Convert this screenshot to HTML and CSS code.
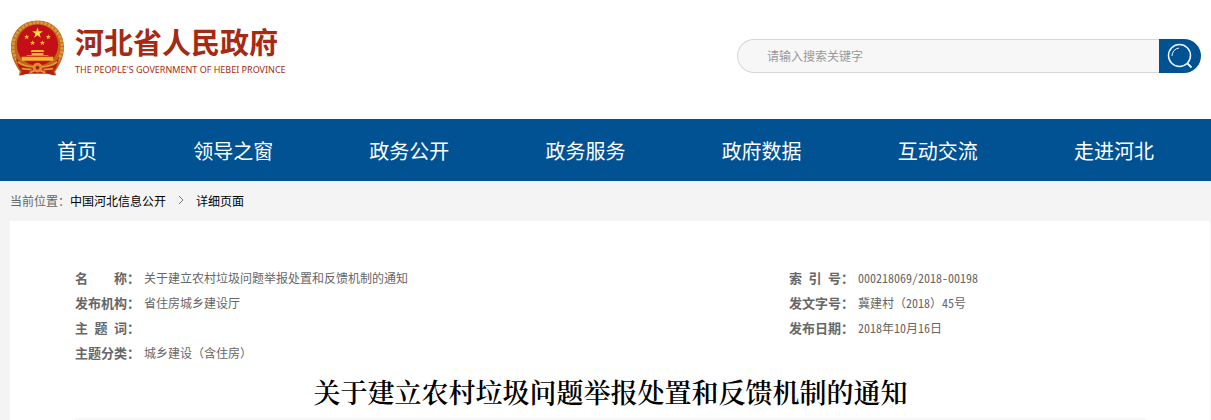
FILE: index.html
```html
<!DOCTYPE html>
<html lang="zh-CN">
<head>
<meta charset="utf-8">
<meta name="viewport" content="width=device-width, initial-scale=1">
<title>关于建立农村垃圾问题举报处置和反馈机制的通知</title>
<link rel="stylesheet" href="styles.css">
</head>
<body>
<header class="header">
  <a class="logo" href="#">
    <svg class="emblem" viewBox="0 0 56 58" aria-hidden="true">
      <path d="M28 1C12 1 1 13 1 28c0 11 5 19 9 25l-1 4 9-2h20l9 2-1-4c4-6 9-14 9-25C55 13 44 1 28 1Z" fill="#c2651d"/>
      <circle cx="28" cy="28" r="25" fill="none" stroke="#d99a3c" stroke-width="3" stroke-dasharray="3 1"/>
      <circle cx="28" cy="26" r="21" fill="#c40f17"/>
      <path d="M28 8l1.300 4h4.200l-3.400 2.500 1.300 4-3.400-2.500-3.400 2.500 1.300-4-3.400-2.500h4.200Z" fill="#ffdf3c"/>
      <g fill="#f4b62f">
        <path d="M17 15l.7 1.800 2 .1-1.600 1.200.6 2-1.700-1.100-1.700 1.100.6-2-1.600-1.200 2-.1ZM39 15l.7 1.800 2 .1-1.600 1.200.6 2-1.700-1.100-1.700 1.100.6-2-1.600-1.200 2-.1ZM23 21l.7 1.800 2 .1-1.600 1.200.6 2-1.700-1.100-1.700 1.100.6-2-1.600-1.200 2-.1ZM33 21l.7 1.800 2 .1-1.600 1.200.6 2-1.700-1.100-1.700 1.100.6-2-1.600-1.200 2-.1Z"/>
        <path d="M22 31h12l1 2H21ZM22 34h12v2h5v1H17v-1h5ZM12 38h32v4H12Z"/>
      </g>
      <path d="M6 38c5 8 11 9 17 9h10c6 0 12-1 17-9-1 7-3 12-6 15l2 4-9-2H19l-9 2 2-4C9 50 7 45 6 38Z" fill="#b71d18"/>
      <path d="M8 43c6 5 12 5 16 5M48 43c-6 5-12 5-16 5M12 50l10 1M44 50l-10 1M20 54l5-2M36 54l-5-2" fill="none" stroke="#e39a2d" stroke-width="2"/>
      <circle cx="28" cy="49" r="5" fill="#df8d2a"/>
      <circle cx="28" cy="49" r="2" fill="#b71d18"/>
    </svg>
    <span class="brand">
      <span class="brand-name">河北省人民政府</span>
      <span class="brand-sub">THE PEOPLE'S GOVERNMENT OF HEBEI PROVINCE</span>
    </span>
  </a>
  <form class="search">
    <input class="search-input" type="text" placeholder="请输入搜索关键字" aria-label="请输入搜索关键字">
    <button class="search-button" type="button" aria-label="搜索">
      <svg class="search-icon" viewBox="0 0 26 26" fill="none" stroke="#e8f4ff" aria-hidden="true">
        <circle cx="12.500" cy="12.500" r="11" stroke-width="1.500"/>
        <path d="M5 13a8 8 0 0 1 7-8" stroke-width="1"/>
        <path d="M20 20l4.500 4.500" stroke-width="2"/>
      </svg>
    </button>
  </form>
</header>
<nav class="nav">
  <a href="#">首页</a>
  <a href="#">领导之窗</a>
  <a href="#">政务公开</a>
  <a href="#">政务服务</a>
  <a href="#">政府数据</a>
  <a href="#">互动交流</a>
  <a href="#">走进河北</a>
</nav>
<div class="crumbs">
  <span>当前位置：</span>
  <a href="#">中国河北信息公开</a>
  <svg class="chevron" viewBox="0 0 6 10" aria-hidden="true"><path d="M1 1l4 4-4 4" fill="none" stroke="#777"/></svg>
  <a href="#">详细页面</a>
</div>
<main class="article">
  <div class="meta">
    <dl class="meta-list">
      <div class="meta-row"><dt>名&emsp;&emsp;称：</dt><dd>关于建立农村垃圾问题举报处置和反馈机制的通知</dd></div>
      <div class="meta-row"><dt>发布机构：</dt><dd>省住房城乡建设厅</dd></div>
      <div class="meta-row"><dt>主&ensp;题&ensp;词：</dt><dd></dd></div>
      <div class="meta-row"><dt>主题分类：</dt><dd>城乡建设（含住房）</dd></div>
    </dl>
    <dl class="meta-list">
      <div class="meta-row"><dt>索&ensp;引&ensp;号：</dt><dd>000218069/2018-00198</dd></div>
      <div class="meta-row"><dt>发文字号：</dt><dd>冀建村（2018）45号</dd></div>
      <div class="meta-row"><dt>发布日期：</dt><dd>2018年10月16日</dd></div>
    </dl>
  </div>
  <h1 class="title">关于建立农村垃圾问题举报处置和反馈机制的通知</h1>
</main>
</body>
</html>
```
FILE: styles.css
```css
* { box-sizing: border-box; }
body {
  margin: 0;
  background: #f4f4f4;
  color: #666;
  font: 12px/25px "Noto Sans Mono CJK SC", "Noto Sans CJK SC", sans-serif;
}
a { color: inherit; text-decoration: none; }
.header {
  display: flex;
  justify-content: space-between;
  align-items: flex-start;
  padding: 18px 10px 41px;
  background: #fff;
}
.logo { display: flex; gap: 10px; color: #a52a14; }
.emblem { width: 55px; height: 60px; }
.brand { display: flex; flex-direction: column; padding-top: 2px; white-space: nowrap; }
.brand-name { font: bold 29px/43px "Noto Sans CJK SC", sans-serif; }
.brand-sub { font: 9px/14px "Noto Sans", sans-serif; }
.search { display: flex; width: 464px; height: 34px; margin-top: 21px; }
.search-input {
  flex: 1;
  min-width: 0;
  padding: 0 29px 2px;
  border: 1px solid #d6d6d6;
  border-right: 0;
  border-radius: 17px 0 0 17px;
  background: #f7f7f7;
  color: #666;
  font: inherit;
}
.search-input::placeholder { color: #999; }
.search-button {
  display: flex;
  align-items: center;
  justify-content: center;
  width: 42px;
  padding: 0;
  border: 0;
  border-radius: 0 17px 17px 0;
  background: #005293;
}
.search-icon { width: 26px; height: 26px; }
.nav {
  display: flex;
  justify-content: space-between;
  padding: 1px 57px 0;
  background: #005293;
  color: #fff;
  font: 20px/61px "Noto Sans CJK SC", sans-serif;
}
.crumbs { display: flex; align-items: center; height: 40px; padding: 0 10px 2px; }
.crumbs a { color: #000; }
.chevron { width: 6px; height: 10px; margin: 0 12px; }
.article { margin: 0 1px 0 10px; padding: 44px 64px 0 65px; background: #fff; }
.meta { display: grid; grid-template-columns: 2fr 1fr; }
.meta-list { margin: 0; }
.meta-row { display: flex; gap: 4px; white-space: nowrap; }
.meta-row dt { width: 65px; font-size: 13px; font-weight: bold; }
.meta-row dd { margin: 0; }
.title {
  margin: 0;
  padding: 4px 0;
  border-bottom: 3px solid #f7f7f7;
  color: #000;
  font: 600 27px/45px "Noto Serif CJK SC", "Noto Sans CJK SC", serif;
  text-align: center;
}
```
